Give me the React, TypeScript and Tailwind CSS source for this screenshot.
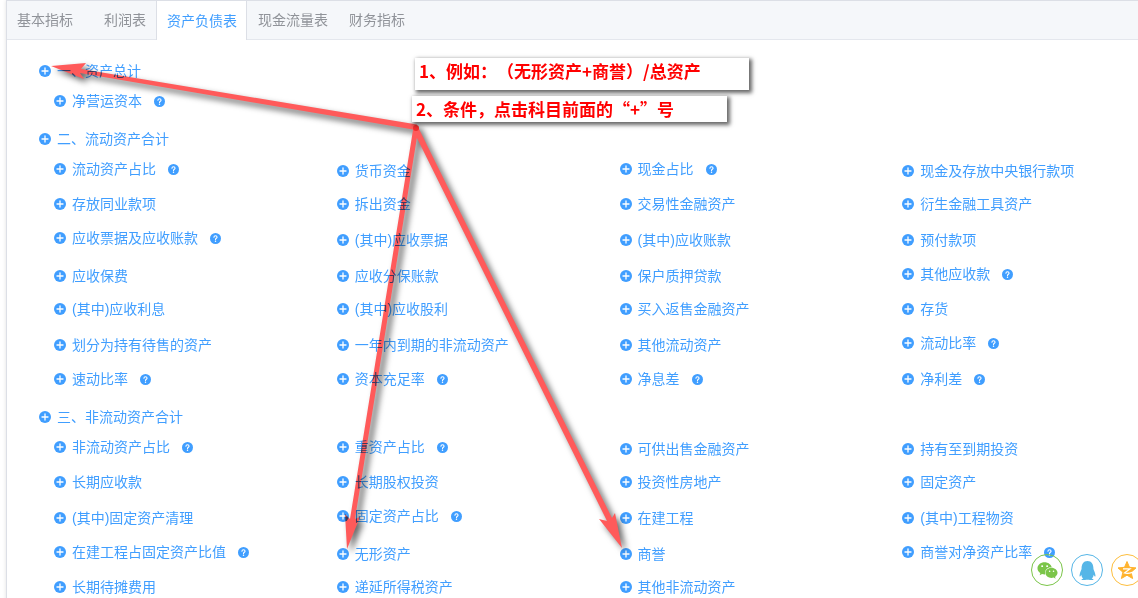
import { FaQq, FaWeixin } from "react-icons/fa";

interface Item {
  name: string;
  help?: boolean;
}

interface Section {
  title: string;
  rows: Item[][];
}

const TABS = ["基本指标", "利润表", "资产负债表", "现金流量表", "财务指标"];
const ACTIVE_TAB = "资产负债表";

const h = (name: string): Item => ({ name, help: true });
const n = (name: string): Item => ({ name });

const SECTIONS: Section[] = [
  { title: "一、资产总计", rows: [[h("净营运资本")]] },
  {
    title: "二、流动资产合计",
    rows: [
      [h("流动资产占比"), n("货币资金"), h("现金占比"), n("现金及存放中央银行款项")],
      [n("存放同业款项"), n("拆出资金"), n("交易性金融资产"), n("衍生金融工具资产")],
      [h("应收票据及应收账款"), n("(其中)应收票据"), n("(其中)应收账款"), n("预付款项")],
      [n("应收保费"), n("应收分保账款"), n("保户质押贷款"), h("其他应收款")],
      [n("(其中)应收利息"), n("(其中)应收股利"), n("买入返售金融资产"), n("存货")],
      [n("划分为持有待售的资产"), n("一年内到期的非流动资产"), n("其他流动资产"), h("流动比率")],
      [h("速动比率"), h("资本充足率"), h("净息差"), h("净利差")],
    ],
  },
  {
    title: "三、非流动资产合计",
    rows: [
      [h("非流动资产占比"), h("重资产占比"), n("可供出售金融资产"), n("持有至到期投资")],
      [n("长期应收款"), n("长期股权投资"), n("投资性房地产"), n("固定资产")],
      [n("(其中)固定资产清理"), h("固定资产占比"), n("在建工程"), n("(其中)工程物资")],
      [h("在建工程占固定资产比值"), n("无形资产"), n("商誉"), h("商誉对净资产比率")],
      [n("长期待摊费用"), n("递延所得税资产"), n("其他非流动资产")],
    ],
  },
];

function PlusIcon() {
  return (
    <svg viewBox="0 0 12 12" className="size-3 shrink-0" aria-hidden="true">
      <circle cx="6" cy="6" r="6" fill="#409eff" />
      <path d="M6 3v6M3 6h6" stroke="#fff" strokeWidth="1.3" strokeLinecap="round" />
    </svg>
  );
}

function HelpIcon() {
  return (
    <svg viewBox="0 0 12 12" className="size-[11px]" aria-hidden="true">
      <circle cx="6" cy="6" r="6" fill="#409eff" />
      <path
        d="M4.3 4.7C4.3 2.4 7.7 2.5 7.7 4.6C7.7 5.8 6 5.8 6 7.2"
        fill="none"
        stroke="#fff"
        strokeWidth="1.2"
        strokeLinecap="round"
      />
      <circle cx="6" cy="9.1" r="0.8" fill="#fff" />
    </svg>
  );
}

function Entry({ item, mixed }: { item: Item; mixed: boolean }) {
  const height = item.help ? "h-[30px]" : mixed ? "h-[34px]" : "h-7";
  return (
    <div className={`flex items-center whitespace-nowrap ${height}`}>
      <button className="flex items-center gap-1.5">
        <PlusIcon />
        {item.name}
      </button>
      {item.help && (
        <button aria-label={`${item.name}说明`} className="ml-3">
          <HelpIcon />
        </button>
      )}
    </div>
  );
}

function Row({ items }: { items: Item[] }) {
  const mixed = items.some((i) => i.help);
  return (
    <div
      className={`grid grid-cols-[6fr_6fr_6fr_5fr] items-start pl-[15px] ${mixed ? "h-9" : "h-[33px]"}`}
    >
      {items.map((i) => (
        <Entry key={i.name} item={i} mixed={mixed} />
      ))}
    </div>
  );
}

function Arrows() {
  return (
    <svg
      width="640"
      height="560"
      viewBox="0 0 640 560"
      className="pointer-events-none absolute top-0 left-0 mix-blend-multiply drop-shadow-[4px_4px_3px_rgba(0,0,0,0.6)]"
      aria-hidden="true"
    >
      <g fill="#ff5a5a">
        <path d="M51 66L86 63L81 69L417 124.500L416 130L80 73L84 79Z" />
        <path d="M347 549L345 514L350 519L413.500 127L418.500 128L355 519L360 517Z" />
        <path d="M622 548L599 519L607 521L413.500 131L418.500 128L612 518L615 513Z" />
      </g>
      <circle cx="416" cy="128" r="3" fill="#f22c2c" />
    </svg>
  );
}

function StarIcon() {
  return (
    <svg viewBox="0 0 20 20" className="size-5" aria-hidden="true">
      <path
        d="M10 1.500l2.500 5.800 6.500.6-4.900 4.300 1.500 6.300L10 15.200l-5.600 3.300 1.500-6.300L1 7.900l6.500-.6z"
        fill="#ffb32e"
        stroke="#ffb32e"
        strokeLinejoin="round"
      />
      <path d="M6 8.800h7L7.500 13q3.500.8 8-.6" fill="none" stroke="#fff" strokeWidth="1.200" />
    </svg>
  );
}

export default function App() {
  return (
    <div className="relative h-screen overflow-hidden bg-white pl-1.5 font-['Liberation_Sans','Noto_Sans_CJK_SC',sans-serif] text-sm">
      <main className="min-h-full border-t border-l border-[#dcdfe6] shadow-[0_0_4px_rgba(0,0,0,0.12)]">
        <nav className="flex h-[39px] border-b border-[#e4e7ed] bg-[#f5f7fa] text-[#909399]">
          {TABS.map((t, i) => (
            <button
              key={t}
              className={
                t === ACTIVE_TAB
                  ? "-mb-px border-x border-[#dcdfe6] bg-white pr-[9px] pl-2.5 text-[#409eff]"
                  : `border-x border-transparent ${i === 0 ? "pr-5 pl-[9px]" : i === 1 ? "px-[9px]" : "pr-[9px] pl-2.5"}`
              }
            >
              {t}
            </button>
          ))}
        </nav>
        <div className="pt-3.5 pl-8 text-[#409eff]">
          {SECTIONS.map((s) => (
            <section key={s.title}>
              <h2 className="flex h-8 items-center pt-0.5">
                <button className="flex items-center gap-1.5">
                  <PlusIcon />
                  {s.title}
                </button>
              </h2>
              {s.rows.map((r) => (
                <Row key={r[0].name} items={r} />
              ))}
            </section>
          ))}
        </div>
      </main>

      <div className="absolute top-[58px] left-[415px] h-8 w-[334px] bg-white pl-1 font-['Noto_Sans_CJK_SC',sans-serif] text-[17px] leading-[26px] font-bold whitespace-nowrap text-[#f00] shadow-[2px_2px_4px_1px_rgba(0,0,0,0.6)] [text-spacing-trim:space-all]">
        1、例如：（无形资产+商誉）/总资产
      </div>
      <div className="absolute top-24 left-[412px] h-[26px] w-[315px] bg-white pl-1 font-['Noto_Sans_CJK_SC',sans-serif] text-[17px] leading-[26px] font-bold whitespace-nowrap text-[#f00] shadow-[2px_2px_4px_1px_rgba(0,0,0,0.6)] [text-spacing-trim:space-all]">
        2、条件，点击科目前面的“+”号
      </div>
      <Arrows />

      <div className="absolute top-[554px] left-[1031px] flex gap-2">
        <a
          href="#wechat"
          aria-label="微信"
          className="flex size-8 items-center justify-center rounded-full border border-[#7bc549] text-[#7bc549]"
        >
          <FaWeixin size={21} />
        </a>
        <a
          href="#qq"
          aria-label="QQ"
          className="flex size-8 items-center justify-center rounded-full border border-[#56b6e7] text-[#56b6e7]"
        >
          <FaQq size={19} />
        </a>
        <a
          href="#qzone"
          aria-label="QQ空间"
          className="flex size-8 items-center justify-center rounded-full border border-[#fdbe3d]"
        >
          <StarIcon />
        </a>
      </div>
    </div>
  );
}
